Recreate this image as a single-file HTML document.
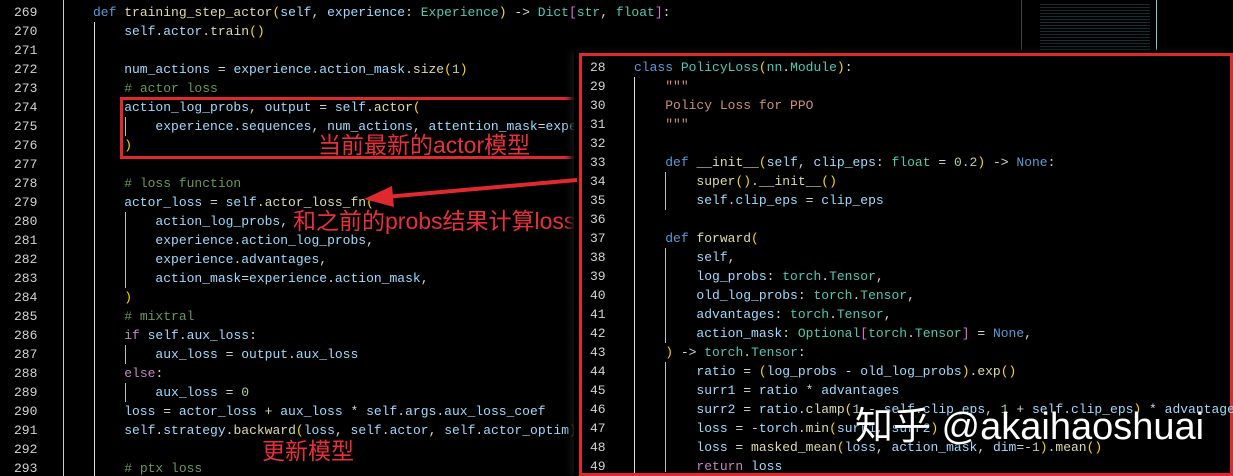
<!DOCTYPE html>
<html><head><meta charset="utf-8"><style>
html,body{margin:0;padding:0;background:#000;width:1233px;height:476px;overflow:hidden;position:relative}
.m{font-family:"Liberation Mono","DejaVu Sans Mono",monospace;font-size:13px;line-height:19px;white-space:pre;position:absolute;color:#9cdcfe}
.ln{color:#d4d4d4;font-family:"Liberation Mono",monospace;font-size:13px;position:absolute;line-height:19px}
.v{color:#9cdcfe}.f{color:#dcdcaa}.k{color:#569cd6}.p{color:#c586c0}.t{color:#4ec9b0}.c{color:#6a9955}.s{color:#ce9178}.n{color:#b5cea8}.b{color:#ffd700}.w{color:#d4d4d4}.pb{color:#da70d6}
.g{position:absolute;width:1px;background:#bbb}
.red{position:absolute;color:#e8303a;font-family:"Liberation Sans","Noto Sans CJK SC",sans-serif;font-size:23px;line-height:26px;white-space:nowrap}
</style></head><body>
<div class="ln" style="left:14px;top:3px">269<br>270<br>271<br>272<br>273<br>274<br>275<br>276<br>277<br>278<br>279<br>280<br>281<br>282<br>283<br>284<br>285<br>286<br>287<br>288<br>289<br>290<br>291<br>292<br>293</div>
<div class="g" style="left:63px;top:0;height:476px;background:#ccc"></div>
<div class="g" style="left:94px;top:22px;height:454px;background:#ddd"></div>
<div class="g" style="left:125px;top:117px;height:19px"></div>
<div class="g" style="left:125px;top:212px;height:76px"></div>
<div class="g" style="left:125px;top:345px;height:19px"></div>
<div class="g" style="left:125px;top:383px;height:19px"></div>
<div class="m" style="left:93px;top:3px"><span class="k">def</span> <span class="f">training_step_actor</span><span class="b">(</span>self<span class="w">, </span>experience<span class="w">: </span><span class="t">Experience</span><span class="b">)</span><span class="w"> -&gt; </span><span class="t">Dict</span><span class="pb">[</span><span class="t">str</span><span class="w">, </span><span class="t">float</span><span class="pb">]</span><span class="w">:</span>
    self<span class="w">.</span>actor<span class="w">.</span><span class="f">train</span><span class="b">()</span>

    num_actions<span class="w"> = </span>experience<span class="w">.</span>action_mask<span class="w">.</span><span class="f">size</span><span class="b">(</span><span class="n">1</span><span class="b">)</span>
    <span class="c"># actor loss</span>
    action_log_probs<span class="w">, </span>output<span class="w"> = </span>self<span class="w">.</span><span class="f">actor</span><span class="b">(</span>
        experience<span class="w">.</span>sequences<span class="w">, </span>num_actions<span class="w">, </span>attention_mask<span class="w">=</span>exper
    <span class="b">)</span>

    <span class="c"># loss function</span>
    actor_loss<span class="w"> = </span>self<span class="w">.</span><span class="f">actor_loss_fn</span><span class="b">(</span>
        action_log_probs<span class="w">,</span>
        experience<span class="w">.</span>action_log_probs<span class="w">,</span>
        experience<span class="w">.</span>advantages<span class="w">,</span>
        action_mask<span class="w">=</span>experience<span class="w">.</span>action_mask<span class="w">,</span>
    <span class="b">)</span>
    <span class="c"># mixtral</span>
    <span class="p">if</span> self<span class="w">.</span>aux_loss<span class="w">:</span>
        aux_loss<span class="w"> = </span>output<span class="w">.</span>aux_loss
    <span class="p">else</span><span class="w">:</span>
        aux_loss<span class="w"> = </span><span class="n">0</span>
    loss<span class="w"> = </span>actor_loss<span class="w"> + </span>aux_loss<span class="w"> * </span>self<span class="w">.</span>args<span class="w">.</span>aux_loss_coef
    self<span class="w">.</span>strategy<span class="w">.</span><span class="f">backward</span><span class="b">(</span>loss<span class="w">, </span>self<span class="w">.</span>actor<span class="w">, </span>self<span class="w">.</span>actor_optim<span class="b">)</span>

    <span class="c"># ptx loss</span></div>
<div style="position:absolute;left:1040px;top:2px;width:110px;height:48px;background:repeating-linear-gradient(#000 0 2px,#1a3a3a 2px 3px);opacity:.8"></div>
<div class="g" style="left:1021px;top:0;height:50px;background:#444"></div>
<div class="g" style="left:1156px;top:0;height:50px;background:#8cc"></div>
<div style="position:absolute;left:120px;top:97px;width:452px;height:56px;border:3px solid #e0282f"></div>
<div class="red" style="left:318px;top:132px">当前最新的actor模型</div>
<div class="red" style="left:293px;top:208px">和之前的probs结果计算loss</div>
<div class="red" style="left:262px;top:438px">更新模型</div>
<div style="position:absolute;left:574px;top:51px;width:659px;height:425px;background:#000;box-shadow:-4px 0 6px #111"></div>
<div style="position:absolute;left:579px;top:53px;width:648px;height:417px;border:3px solid #e0282f"></div>
<div class="ln" style="left:590px;top:58px">28<br>29<br>30<br>31<br>32<br>33<br>34<br>35<br>36<br>37<br>38<br>39<br>40<br>41<br>42<br>43<br>44<br>45<br>46<br>47<br>48<br>49</div>
<div class="g" style="left:634px;top:77px;height:396px;background:#ddd"></div>
<div class="g" style="left:665px;top:172px;height:38px"></div>
<div class="g" style="left:665px;top:248px;height:95px"></div>
<div class="g" style="left:665px;top:362px;height:110px"></div>
<div class="m" style="left:634px;top:58px"><span class="k">class</span> <span class="t">PolicyLoss</span><span class="b">(</span><span class="t">nn</span><span class="w">.</span><span class="t">Module</span><span class="b">)</span><span class="w">:</span>
    <span class="s">"""</span>
    <span class="s">Policy Loss for PPO</span>
    <span class="s">"""</span>

    <span class="k">def</span> <span class="f">__init__</span><span class="b">(</span>self<span class="w">, </span>clip_eps<span class="w">: </span><span class="t">float</span><span class="w"> = </span><span class="n">0.2</span><span class="b">)</span><span class="w"> -&gt; </span><span class="k">None</span><span class="w">:</span>
        <span class="f">super</span><span class="b">()</span><span class="w">.</span><span class="f">__init__</span><span class="b">()</span>
        self<span class="w">.</span>clip_eps<span class="w"> = </span>clip_eps

    <span class="k">def</span> <span class="f">forward</span><span class="b">(</span>
        self<span class="w">,</span>
        log_probs<span class="w">: </span><span class="t">torch</span><span class="w">.</span><span class="t">Tensor</span><span class="w">,</span>
        old_log_probs<span class="w">: </span><span class="t">torch</span><span class="w">.</span><span class="t">Tensor</span><span class="w">,</span>
        advantages<span class="w">: </span><span class="t">torch</span><span class="w">.</span><span class="t">Tensor</span><span class="w">,</span>
        action_mask<span class="w">: </span><span class="t">Optional</span><span class="pb">[</span><span class="t">torch</span><span class="w">.</span><span class="t">Tensor</span><span class="pb">]</span><span class="w"> = </span><span class="k">None</span><span class="w">,</span>
    <span class="b">)</span><span class="w"> -&gt; </span><span class="t">torch</span><span class="w">.</span><span class="t">Tensor</span><span class="w">:</span>
        ratio<span class="w"> = </span><span class="b">(</span>log_probs<span class="w"> - </span>old_log_probs<span class="b">)</span><span class="w">.</span><span class="f">exp</span><span class="b">()</span>
        surr1<span class="w"> = </span>ratio<span class="w"> * </span>advantages
        surr2<span class="w"> = </span>ratio<span class="w">.</span><span class="f">clamp</span><span class="b">(</span><span class="n">1</span><span class="w"> - </span>self<span class="w">.</span>clip_eps<span class="w">, </span><span class="n">1</span><span class="w"> + </span>self<span class="w">.</span>clip_eps<span class="b">)</span><span class="w"> * </span>advantages
        loss<span class="w"> = -</span>torch<span class="w">.</span><span class="f">min</span><span class="b">(</span>surr1<span class="w">, </span>surr2<span class="b">)</span>
        loss<span class="w"> = </span><span class="f">masked_mean</span><span class="b">(</span>loss<span class="w">, </span>action_mask<span class="w">, </span>dim<span class="w">=-</span><span class="n">1</span><span class="b">)</span><span class="w">.</span><span class="f">mean</span><span class="b">()</span>
        <span class="p">return</span> loss</div>
<div style="position:absolute;left:855px;top:404px;color:#fff;font-family:'Liberation Sans','Noto Sans CJK SC',sans-serif;font-size:38px;line-height:46px;white-space:nowrap;text-shadow:0 0 2px #000">知乎 @akaihaoshuai</div>
<svg style="position:absolute;left:0;top:0" width="1233" height="476"><line x1="577" y1="180" x2="385" y2="197" stroke="#e0282f" stroke-width="4"/><polygon points="364,199 392,186 394,207" fill="#e0282f"/></svg>
</body></html>
